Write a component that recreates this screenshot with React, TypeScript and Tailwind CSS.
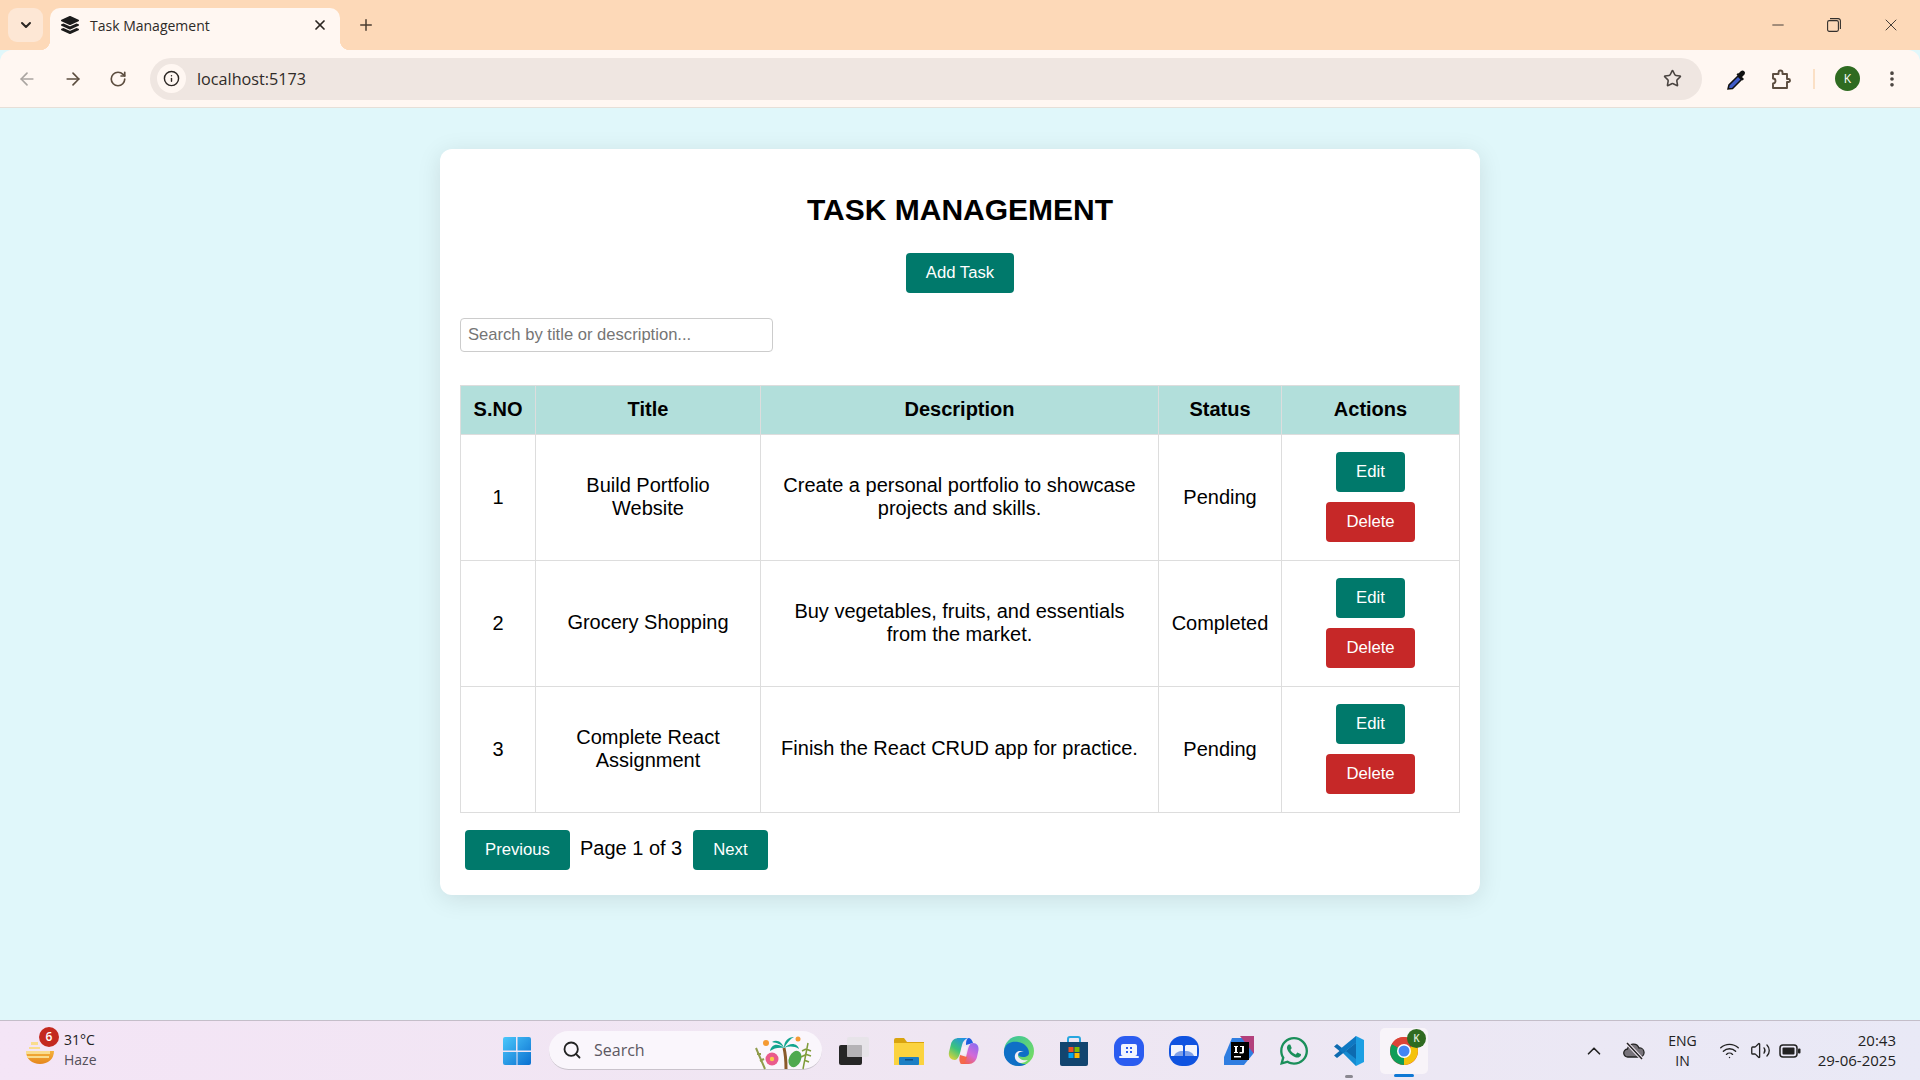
import {
  ArrowLeft,
  ArrowRight,
  ChevronDown,
  ChevronUp,
  EllipsisVertical,
  Info,
  Minus,
  Plus,
  RotateCw,
  Search,
  Star,
  Volume2,
  Wifi,
  X,
} from "lucide-react";
import type { ReactNode } from "react";
import { FaLayerGroup, FaWhatsapp } from "react-icons/fa";

const tasks = [
  {
    id: 1,
    title: "Build Portfolio Website",
    description: "Create a personal portfolio to showcase projects and skills.",
    status: "Pending",
  },
  {
    id: 2,
    title: "Grocery Shopping",
    description: "Buy vegetables, fruits, and essentials from the market.",
    status: "Completed",
  },
  {
    id: 3,
    title: "Complete React Assignment",
    description: "Finish the React CRUD app for practice.",
    status: "Pending",
  },
];

function ChromeBar() {
  return (
    <div className="shrink-0 font-['Open_Sans',sans-serif]">
      {/* Tab strip */}
      <div className="flex h-[50px] items-end bg-[#fdd9b8] pl-2">
        <div className="mb-2 flex h-[34px] w-[35px] items-center justify-center rounded-[9px] bg-[#fde7d5]">
          <ChevronDown size={16} strokeWidth={3} className="text-[#2b2622]" />
        </div>
        <div className="relative ml-[7px] flex h-[42px] w-[290px] items-center rounded-t-[10px] bg-[#fff7f2] pb-[8px] pl-[11px] pr-[12px]">
          <span className="absolute bottom-0 left-[-10px] h-[10px] w-[10px] bg-[radial-gradient(circle_at_0_0,#fdd9b8_10px,#fff7f2_10.5px)]" />
          <span className="absolute bottom-0 right-[-10px] h-[10px] w-[10px] bg-[radial-gradient(circle_at_100%_0,#fdd9b8_10px,#fff7f2_10.5px)]" />
          <FaLayerGroup size={18} className="text-[#1c1c1c]" />
          <span className="ml-[11px] flex-1 text-[14px] text-[#2d2a28]">Task Management</span>
          <X size={16} strokeWidth={2.6} className="text-[#2b2622]" />
        </div>
        <div className="mb-[9px] ml-[16px] flex h-[32px] w-[20px] items-center justify-center">
          <Plus size={18} strokeWidth={2} className="text-[#4a3c30]" />
        </div>
        <div className="mb-[13px] ml-auto flex h-[24px] items-center gap-[40px] pr-[19px] text-[#33302d]">
          <Minus size={18} strokeWidth={1.2} />
          <svg width="14" height="14" viewBox="0 0 14 14" fill="none" stroke="currentColor" strokeWidth="1.1">
            <rect x="0.6" y="2.6" width="10.8" height="10.8" rx="1.6" />
            <path d="M3 .6h8.2a2.2 2.2 0 0 1 2.2 2.2V11" />
          </svg>
          <X size={20} strokeWidth={1.1} />
        </div>
      </div>

      {/* Toolbar */}
      <div className="flex h-[58px] items-center rounded-t-[12px] border-b border-[#e6dfd8] bg-[#fff7f2]">
        <div className="flex w-[150px] items-center gap-[26px] pl-[17px]">
          <ArrowLeft size={20} strokeWidth={2} className="text-[#aaa5a1]" />
          <ArrowRight size={20} strokeWidth={2} className="text-[#5c4d3f]" />
          <RotateCw size={18} strokeWidth={2.2} className="text-[#5c4d3f]" />
        </div>
        <div className="flex h-[42px] w-[1552px] items-center rounded-full bg-[#efe6e1] pl-[7px] pr-[20px]">
          <div className="flex h-[29px] w-[29px] items-center justify-center rounded-full bg-[#fff7f2]">
            <Info size={17} strokeWidth={2} className="text-[#2b2622]" />
          </div>
          <span className="ml-[11px] flex-1 pt-[2px] text-[16.2px] text-[#2f2b28]">localhost:5173</span>
          <Star size={19} strokeWidth={2} className="text-[#4a4440]" />
        </div>
        <div className="ml-[23px] flex items-center">
          <svg width="22" height="22" viewBox="0 0 22 22">
            <path d="M3 21l1-4 9-9 3.500 3.500-9 9z" fill="#3f5cc8" stroke="#111" strokeWidth="1.500" />
            <path d="M11.500 6.500l6 6 1.500-1.500-2-2 2.500-2.500a2.500 2.500 0 0 0-3.500-3.500L13.500 5.500 13 5z" fill="#111" />
          </svg>
          <svg width="22" height="22" viewBox="0 0 22 22" fill="none" stroke="#5c4d3f" strokeWidth="1.900" className="ml-[23px]">
            <path d="M3 6h5.500V4.500a2 2 0 0 1 4 0V6H17v5h1.500a1.500 1.500 0 0 1 0 3H17v6H3v-4.500a2.500 2.500 0 0 0 0-5z" strokeLinejoin="round" />
          </svg>
          <div className="ml-[21px] h-[20px] w-[2px] bg-[#fbe0c6]" />
          <div className="ml-[20px] flex h-[25px] w-[25px] items-center justify-center rounded-full bg-[#2f6b21] text-[12px] text-white">
            K
          </div>
          <EllipsisVertical size={20} strokeWidth={2.4} className="ml-[22px] text-[#4a4440]" />
        </div>
      </div>
    </div>
  );
}

function TealButton({ children }: { children: ReactNode }) {
  return (
    <button className="h-10 rounded-[4px] bg-[#00796b] px-5 text-[16.7px] text-white">{children}</button>
  );
}

function TaskCard() {
  return (
    <div className="mx-auto mt-[41px] w-[1040px] rounded-xl bg-white px-5 pb-[25px] pt-[43px] shadow-[0_4px_24px_rgba(0,0,0,0.1)] font-['Liberation_Sans',Arial,sans-serif] text-black">
      <h1 className="text-center text-[30px] font-bold leading-[36px]">TASK MANAGEMENT</h1>
      <div className="mt-[25px] flex justify-center">
        <TealButton>Add Task</TealButton>
      </div>
      <input
        placeholder="Search by title or description..."
        className="mt-[25px] block h-[34px] w-[313px] rounded-[4px] border border-[#cccccc] px-[7px] text-[16.6px] placeholder:text-[#757575]"
      />
      <table className="mt-[33px] w-[999px] table-fixed border-collapse text-center text-[20px] leading-[23px]">
        <colgroup>
          <col className="w-[75px]" />
          <col className="w-[225px]" />
          <col className="w-[398px]" />
          <col className="w-[123px]" />
          <col className="w-[178px]" />
        </colgroup>
        <thead>
          <tr className="h-[49px] bg-[#b2dfdb]">
            {["S.NO", "Title", "Description", "Status", "Actions"].map((h) => (
              <th key={h} className="border border-[#dddddd] pb-[2px] font-bold">
                {h}
              </th>
            ))}
          </tr>
        </thead>
        <tbody>
          {tasks.map((t) => (
            <tr key={t.id} className="h-[126px]">
              <td className="border border-[#dddddd]">{t.id}</td>
              <td className="border border-[#dddddd] px-4 pb-[2px]">{t.title}</td>
              <td className="border border-[#dddddd] px-[16px] pb-[2px]">{t.description}</td>
              <td className="border border-[#dddddd]">{t.status}</td>
              <td className="border border-[#dddddd]">
                <div className="mb-[2px] flex flex-col items-center gap-[10px]">
                  <TealButton>Edit</TealButton>
                  <button className="h-10 rounded-[4px] bg-[#c62828] px-5 text-[16.7px] text-white">Delete</button>
                </div>
              </td>
            </tr>
          ))}
        </tbody>
      </table>
      <div className="mt-[17px] flex items-center pl-[5px] text-[20px]">
        <TealButton>Previous</TealButton>
        <span className="mb-[4px] ml-[10px] mr-[11px]">Page 1 of 3</span>
        <TealButton>Next</TealButton>
      </div>
    </div>
  );
}

function WindowsLogo() {
  return (
    <svg width="30" height="30" viewBox="0 0 30 30">
      <defs>
        <linearGradient id="winGrad" x1="0" y1="0" x2="1" y2="1">
          <stop offset="0" stopColor="#4cc8fb" />
          <stop offset="1" stopColor="#0a6fd0" />
        </linearGradient>
      </defs>
      <path d="M1 3a2 2 0 0 1 2-2h11v13.500H1zM15.500 1H27a2 2 0 0 1 2 2v11.500H15.500zM1 16h13.500v13H3a2 2 0 0 1-2-2zM15.500 16H29v11a2 2 0 0 1-2 2H15.500z" fill="url(#winGrad)" />
    </svg>
  );
}

function TaskIcon({ children, className = "" }: { children: ReactNode; className?: string }) {
  return <div className={`relative flex h-[46px] w-[48px] items-center justify-center ${className}`}>{children}</div>;
}

function PalmDoodle() {
  return (
    <svg width="60" height="36" viewBox="0 0 60 36">
      <path d="M32 35c0-8 0-13-2-21" stroke="#8a5a2b" strokeWidth="3" fill="none" />
      <path d="M30 14c-7-6-13-3-14 3 4-3 9-4 14-3zM30 14c7-7 14-4 15 1-5-3-10-3-15-1zM30 14c0-7 4-11 10-11-4 2-7 6-10 11zM30 14c-2-6-7-9-12-6 5 1 9 2 12 6z" fill="#12a58f" />
      <circle cx="18" cy="25" r="6.500" fill="#ea5b8c" />
      <circle cx="18" cy="25" r="2.200" fill="#f8c94a" />
      <ellipse cx="41" cy="25" rx="6" ry="8.500" fill="#4fa94f" transform="rotate(25 41 25)" />
      <path d="M54 9 49 35M52 15l5 2M51 20l6 2M50 26l5 2M52 15l-4 2M51 21l-4 2" stroke="#7f9c3a" strokeWidth="1.500" fill="none" />
      <path d="M2 14 11 35M3 20l4 0M6 27l4-2" stroke="#8f9c4c" strokeWidth="2" fill="none" />
      <circle cx="12" cy="9" r="3" fill="#f59a33" />
      <circle cx="44" cy="5" r="2.500" fill="#f59a33" />
    </svg>
  );
}

function Taskbar() {
  return (
    <div className="flex h-[60px] shrink-0 items-center border-t border-[#c4bec9] bg-gradient-to-r from-[#f4e5f6] via-[#efe6f2] to-[#e9e9f6] font-['Open_Sans',sans-serif] text-[#222]">
      {/* Weather */}
      <div className="relative flex w-[493px] items-center pl-[25px]">
        <svg width="30" height="30" viewBox="0 0 30 30">
          <defs>
            <linearGradient id="sunGrad" x1="0" y1="0" x2="0" y2="1">
              <stop offset="0" stopColor="#f4b23c" />
              <stop offset="1" stopColor="#e5861c" />
            </linearGradient>
          </defs>
          <path d="M1 15h28c0 8-6 13-14 13S1 23 1 15z" fill="url(#sunGrad)" />
          <path d="M6 6h7v3H6zM4 11h11v2H4zM1 15h24v3H1zM2 20h22v2H2z" fill="#f9dc8e" />
        </svg>
        <span className="absolute left-[39px] top-[-3px] flex h-[20px] w-[20px] items-center justify-center rounded-full bg-[#c4291f] text-[12px] font-semibold text-white">
          6
        </span>
        <div className="ml-[9px] mb-[2px] text-[14px] leading-[20px]">
          <div>31°C</div>
          <div className="text-[#55505a]">Haze</div>
        </div>
      </div>

      {/* Pinned apps */}
      <div className="flex items-center">
        <TaskIcon>
          <WindowsLogo />
        </TaskIcon>
        <div className="relative ml-[8px] flex h-[39px] w-[273px] items-center rounded-full border-b border-[#c9c3cc] bg-[#faf6fc] pl-[13px]">
          <Search size={20} strokeWidth={2.2} className="text-[#222]" />
          <span className="ml-[12px] text-[16px] text-[#5c5862]">Search</span>
          <span className="absolute right-[8px] top-[3px]">
            <PalmDoodle />
          </span>
        </div>
        <div className="ml-[8px] flex items-center gap-[7px]">
          <TaskIcon>
            <svg width="32" height="30" viewBox="0 0 32 30">
              <rect x="1" y="9" width="23" height="20" rx="2" fill="#262626" />
              <rect x="9" y="1" width="22" height="20" rx="2" fill="#e6e3e8" fillOpacity="0.9" />
              <rect x="9" y="9" width="15" height="12" rx="1" fill="#b5b3b6" />
            </svg>
          </TaskIcon>
          <TaskIcon>
            <svg width="32" height="28" viewBox="0 0 32 28">
              <path d="M1 3a2 2 0 0 1 2-2h8l3 4h17v5H1z" fill="#d9a40f" />
              <rect x="1" y="6" width="30" height="22" fill="#fbd33f" />
              <rect x="6" y="20" width="20" height="8" rx="1" fill="#1c7fc4" />
              <rect x="12" y="22" width="8" height="1.500" fill="#0d4f85" />
            </svg>
          </TaskIcon>
          <TaskIcon>
            <svg width="32" height="30" viewBox="0 0 32 30">
              <defs>
                <linearGradient id="copA" x1="0.8" y1="0" x2="0.2" y2="1">
                  <stop offset="0" stopColor="#1f8fe8" />
                  <stop offset="0.55" stopColor="#3dc47a" />
                  <stop offset="1" stopColor="#d8d23c" />
                </linearGradient>
                <linearGradient id="copB" x1="0.8" y1="0" x2="0.2" y2="1">
                  <stop offset="0" stopColor="#8d6cf0" />
                  <stop offset="0.5" stopColor="#d46ad8" />
                  <stop offset="1" stopColor="#f5603f" />
                </linearGradient>
              </defs>
              <path d="M11 2h9c-3 1-5 3-6 7l-2 8c-1 4-3 7-5 7-4 0-7-3-6-8l2-8c1-4 4-6 8-6z" fill="url(#copA)" />
              <path d="M20 2c3 0 4 2 5 5l-7 2c0-3 0-5 2-7z" fill="#1d5fe0" />
              <path d="M21 28h-9c3-1 5-3 6-7l2-8c1-3 2-6 5-6 4 0 6 3 5.500 7l-1.500 7c-1 4-4 7-8 7z" fill="url(#copB)" />
              <path d="M13 28c3 0 5-3 6-7l-7-2c-1 3-1 7 1 9z" fill="#f4694a" />
              <path d="M14 11c2-1 4-1 5 0l-1.500 7c-2 1-4 1-5 0z" fill="#f6eef8" />
            </svg>
          </TaskIcon>
          <TaskIcon>
            <svg width="32" height="32" viewBox="0 0 32 32">
              <defs>
                <linearGradient id="edgeA" x1="0" y1="0" x2="1" y2="1">
                  <stop offset="0" stopColor="#35c1a1" />
                  <stop offset="1" stopColor="#7fe05a" />
                </linearGradient>
              </defs>
              <circle cx="16" cy="16" r="15" fill="url(#edgeA)" />
              <path d="M1 16C2 8 9 6 15 7c6 1 11 5 11 11 0 2-2 4-6 4-3 0-5-1-5-3-4 5 1 11 8 10-3 2-6 2-8 2C7 31 0 24 1 16z" fill="#0f6fc6" />
              <path d="M12 20c1-4 5-5 9-3-3-1-6 0-6 3 0 4 5 6 10 5-2 2-5 3-7 3-4 0-7-4-6-8z" fill="#f4ecf5" />
            </svg>
          </TaskIcon>
          <TaskIcon>
            <svg width="30" height="32" viewBox="0 0 30 32">
              <path d="M9 8V4a2 2 0 0 1 2-2h8a2 2 0 0 1 2 2v4" fill="none" stroke="#28a6df" strokeWidth="2" />
              <path d="M1 7h28v22a2 2 0 0 1-2 2H3a2 2 0 0 1-2-2z" fill="#12456f" />
              <rect x="9.500" y="12" width="5" height="5" fill="#f25022" />
              <rect x="15.500" y="12" width="5" height="5" fill="#7fba00" />
              <rect x="9.500" y="18" width="5" height="5" fill="#00a4ef" />
              <rect x="15.500" y="18" width="5" height="5" fill="#ffb900" />
            </svg>
          </TaskIcon>
          <TaskIcon>
            <svg width="30" height="30" viewBox="0 0 30 30">
              <rect width="30" height="30" rx="11" fill="#2b5cf0" />
              <rect x="7" y="8" width="16" height="12" rx="2" fill="#f2f5fe" />
              <rect x="5" y="20" width="20" height="2" rx="1" fill="#f2f5fe" />
              <path d="M12 11h2v2h-2zM16 11h2v2h-2zM12 15h2v2h-2zM16 15h2v2h-2z" fill="#2b5cf0" />
            </svg>
          </TaskIcon>
          <TaskIcon>
            <svg width="30" height="30" viewBox="0 0 30 30">
              <rect width="30" height="30" rx="13" fill="#0f53e0" />
              <path d="M2 10a1 1 0 0 1 1-1h10l1 1v10H2zM28 10a1 1 0 0 0-1-1H17l-1 1v10h12z" fill="#f1f4fd" />
              <path d="M5 20c1-3 4-5 9-5v5zM25 20c-1-3-4-5-9-5v5z" fill="#7fa0e8" />
            </svg>
          </TaskIcon>
          <TaskIcon>
            <svg width="30" height="30" viewBox="0 0 30 30">
              <path d="M8 2h21v16l-9 11H0v-8z" fill="#2f7de0" />
              <path d="M16 0h14v18z" fill="#b3407c" />
              <rect x="7" y="6" width="18" height="18" fill="#000" />
              <rect x="10" y="20" width="7" height="1.500" fill="#fff" />
              <path d="M10 10h4v1h-1v5h1v1h-4v-1h1v-5h-1zM16 10h4v6c0 1-1 1.500-2 1.500h-2.500v-1.500h2.500v-5h-2z" fill="#fff" />
            </svg>
          </TaskIcon>
          <TaskIcon>
            <FaWhatsapp size={32} className="text-[#1a8f5a]" />
          </TaskIcon>
          <TaskIcon>
            <svg width="30" height="32" viewBox="0 0 30 32">
              <path d="M22 1 30 5v22l-8 4-13-13 13-10z" fill="#1c9fe3" />
              <path d="M22 1v30L8 17z" fill="#0f74bb" fillOpacity="0.45" />
              <path d="M22 8 3 23l-3-2.500 5.500-4.500L0 11.500 3 9l19 15z" fill="#0d6bb0" />
              <path d="M22 1v7L9 18l-4-3z" fill="#0e78c2" />
            </svg>
            <span className="absolute bottom-[-4px] h-[3px] w-[8px] rounded-full bg-[#8a8890]" />
          </TaskIcon>
          <TaskIcon className="rounded-[5px] bg-[#f8f4f9]">
            <svg width="30" height="30" viewBox="0 0 30 30">
              <circle cx="15" cy="15" r="14" fill="#db4437" />
              <path d="M15 15 27.100 8A14 14 0 0 1 15 29z" fill="#f4c20d" />
              <path d="M15 15 15 29A14 14 0 0 1 2.900 8z" fill="#0f9d58" />
              <path d="M15 1a14 14 0 0 1 12.100 7H15a7 7 0 0 0-6 3.500L2.900 8A14 14 0 0 1 15 1z" fill="#db4437" />
              <circle cx="15" cy="15" r="7" fill="#fff" />
              <circle cx="15" cy="15" r="5.500" fill="#4285f4" />
            </svg>
            <span className="absolute right-[2px] top-[1px] flex h-[19px] w-[19px] items-center justify-center rounded-full bg-[#2f6b21] text-[10px] font-semibold text-[#dfe9da]">
              K
            </span>
            <span className="absolute bottom-[-3px] h-[3px] w-[20px] rounded-full bg-[#0f78d4]" />
          </TaskIcon>
        </div>
      </div>

      {/* System tray */}
      <div className="ml-auto flex items-center pr-[24px]">
        <ChevronUp size={22} strokeWidth={1.8} />
        <svg width="22" height="18" viewBox="0 0 22 18" className="ml-[18px]">
          <path d="M5 15a4 4 0 0 1-.5-8A6 6 0 0 1 16 6a4.500 4.500 0 0 1 1 9z" fill="#77737a" stroke="#222" strokeWidth="1.300" />
          <path d="M4 1l15 16" stroke="#f1e8f3" strokeWidth="3.500" />
          <path d="M4 1l15 16" stroke="#222" strokeWidth="1.500" />
        </svg>
        <div className="ml-[23px] text-center text-[14px] leading-[20px]">
          <div>ENG</div>
          <div>IN</div>
        </div>
        <Wifi size={21} strokeWidth={1.6} className="ml-[22px]" />
        <Volume2 size={21} strokeWidth={1.5} className="ml-[10px]" />
        <svg width="22" height="14" viewBox="0 0 22 14" className="ml-[8px]">
          <rect x="1" y="1" width="17" height="12" rx="3" fill="none" stroke="#222" strokeWidth="1.500" />
          <rect x="3.500" y="3.500" width="12" height="7" rx="1" fill="#222" />
          <rect x="19" y="4.500" width="2.500" height="5" rx="1" fill="#222" />
        </svg>
        <div className="mb-[2px] ml-[17px] text-right text-[15px] leading-[20px]">
          <div>20:43</div>
          <div>29-06-2025</div>
        </div>
      </div>
    </div>
  );
}

export default function App() {
  return (
    <div className="flex h-screen flex-col overflow-hidden bg-[#e0f7fa]">
      <ChromeBar />
      <div className="flex-1 overflow-hidden">
        <TaskCard />
      </div>
      <Taskbar />
    </div>
  );
}
